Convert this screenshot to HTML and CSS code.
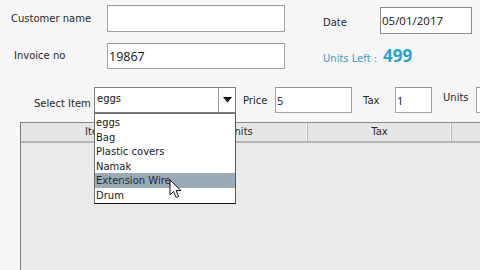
FILE: index.html
```html
<!DOCTYPE html>
<html>
<head>
<meta charset="utf-8">
<link rel="stylesheet" href="styles.css">
</head>
<body>
<div class="form">
  <div class="row r1">
    <span class="lbl l-cust">Customer name</span>
    <div class="box cust"></div>
    <span class="lbl l-date">Date</span>
    <div class="box date">05/01/2017</div>
  </div>
  <div class="row r2">
    <span class="lbl l-inv">Invoice no</span>
    <div class="box inv">19867</div>
    <div class="units-left"><span class="ul-lbl">Units Left :</span><span class="ul-num">499</span></div>
  </div>
  <div class="row r3">
    <span class="lbl l-sel">Select Item</span>
    <div class="combo">
      <span class="combo-text">eggs</span>
      <span class="combo-btn"><svg width="9" height="6" viewBox="0 0 9 6"><path d="M0 0H9L4.5 5.5Z" fill="#111"/></svg></span>
      <ul class="list">
        <li>eggs</li>
        <li>Bag</li>
        <li>Plastic covers</li>
        <li>Namak</li>
        <li class="sel">Extension Wire</li>
        <li>Drum</li>
      </ul>
    </div>
    <span class="lbl l-price">Price</span>
    <div class="box price">5</div>
    <span class="lbl l-tax">Tax</span>
    <div class="box tax">1</div>
    <span class="lbl l-units">Units</span>
    <div class="box units"></div>
  </div>
</div>
<div class="table">
  <div class="thead">
    <div class="th">Item</div>
    <div class="th">Units</div>
    <div class="th">Tax</div>
    <div class="th th-last"></div>
  </div>
  <div class="tbody"></div>
</div>
<svg class="cursor" width="13" height="20" viewBox="0 0 13 20"><path d="M1 1V16L4.5 12.5L7.2 18.5L9.6 17.4L7 11.6H12Z" fill="#fff" stroke="#111" stroke-width="1" stroke-linejoin="round"/></svg>
</body>
</html>
```
FILE: styles.css
```css
* { box-sizing: border-box; }
html, body { margin: 0; padding: 0; }
body {
  width: 480px;
  height: 270px;
  overflow: hidden;
  background: #f6f6f6;
  font-family: "DejaVu Sans", sans-serif;
  font-size: 10px;
  color: #262626;
  position: relative;
}
.form { padding-top: 5px; }
.row { display: flex; align-items: flex-start; }
.row > * { flex-shrink: 0; }
.lbl { line-height: 12px; white-space: nowrap; }
.box {
  background: #fff;
  border: 1px solid #a3a3a3;
  border-top-color: #999;
  font-family: "Open Sans", sans-serif;
  color: #111;
  display: flex;
  align-items: center;
  padding-left: 2px;
}
.r1 { height: 29px; }
.l-cust { margin-left: 11px; width: 96px; margin-top: 8px; }
.cust { width: 178px; height: 27px; }
.l-date { margin-left: 38px; width: 57px; margin-top: 12px; }
.date { width: 92px; height: 27px; margin-top: 2px; font-size: 11.5px; padding-left: 1px; border-color: #8c8c8c; }

.r2 { margin-top: 9px; height: 26px; }
.l-inv { margin-left: 14px; width: 93px; margin-top: 7px; }
.inv { width: 178px; height: 26px; font-size: 12.5px; padding-left: 1px; padding-top: 1px; }
.units-left { margin-left: 38px; display: flex; align-items: baseline; margin-top: 3px; }
.ul-lbl { color: #3a9fc0; width: 60px; }
.ul-num { font-family: "Open Sans", sans-serif; font-weight: 700; font-size: 17px; color: #27a2cb; line-height: 20px; }

.r3 { margin-top: 18px; height: 26px; }
.l-sel { margin-left: 34px; width: 60px; margin-top: 11px; }
.combo {
  position: relative;
  width: 142px;
  height: 26px;
  background: #fff;
  border: 1px solid #7d7d7d;
  display: flex;
}
.combo-text { flex: 1; padding-left: 2px; line-height: 22px; color: #111; }
.combo-btn {
  width: 17px;
  border-left: 1px solid #9a9a9a;
  display: flex;
  align-items: center;
  justify-content: center;
}
.list {
  position: absolute;
  left: -1px;
  top: 25px;
  width: 142px;
  margin: 0;
  padding: 1px 0 0;
  list-style: none;
  background: #fff;
  border: 1px solid #6e6e6e;
  border-bottom-color: #111;
  border-right-color: #555;
  z-index: 5;
}
.list li { height: 14.6px; line-height: 15px; padding-left: 1px; color: #1a1a1a; }
.list li.sel { background: #9aabb8; color: #1e2a36; }
.l-price { margin-left: 7px; width: 32px; margin-top: 8px; }
.price { width: 77px; height: 26px; font-size: 11px; padding-left: 1px; }
.l-tax { margin-left: 11px; width: 32px; margin-top: 8px; }
.tax { width: 37px; height: 26px; font-size: 11px; padding-left: 1px; }
.l-units { margin-left: 11px; width: 33px; margin-top: 5px; }
.units { width: 4px; height: 26px; border-right: none; padding: 0; }

.table {
  margin-top: 9px;
  margin-left: 20px;
  width: 460px;
  height: 148px;
  border-left: 1px solid #7a7a7a;
  border-top: 1px solid #8a8a8a;
  background: #eaeaea;
}
.thead {
  display: grid;
  grid-template-columns: 152px 135px 144px 1fr;
  height: 20px;
  background: #e5e5e5;
  border-bottom: 2px solid #b4b4b4;
}
.th {
  text-align: center;
  line-height: 18px;
  color: #2a2a2a;
  border-right: 1px solid #b8b8b8;
  box-shadow: inset -1px 0 0 #f6f6f6;
}
.th-last { border-right: none; box-shadow: none; }
.cursor { position: absolute; left: 169px; top: 179px; z-index: 10; }
```
